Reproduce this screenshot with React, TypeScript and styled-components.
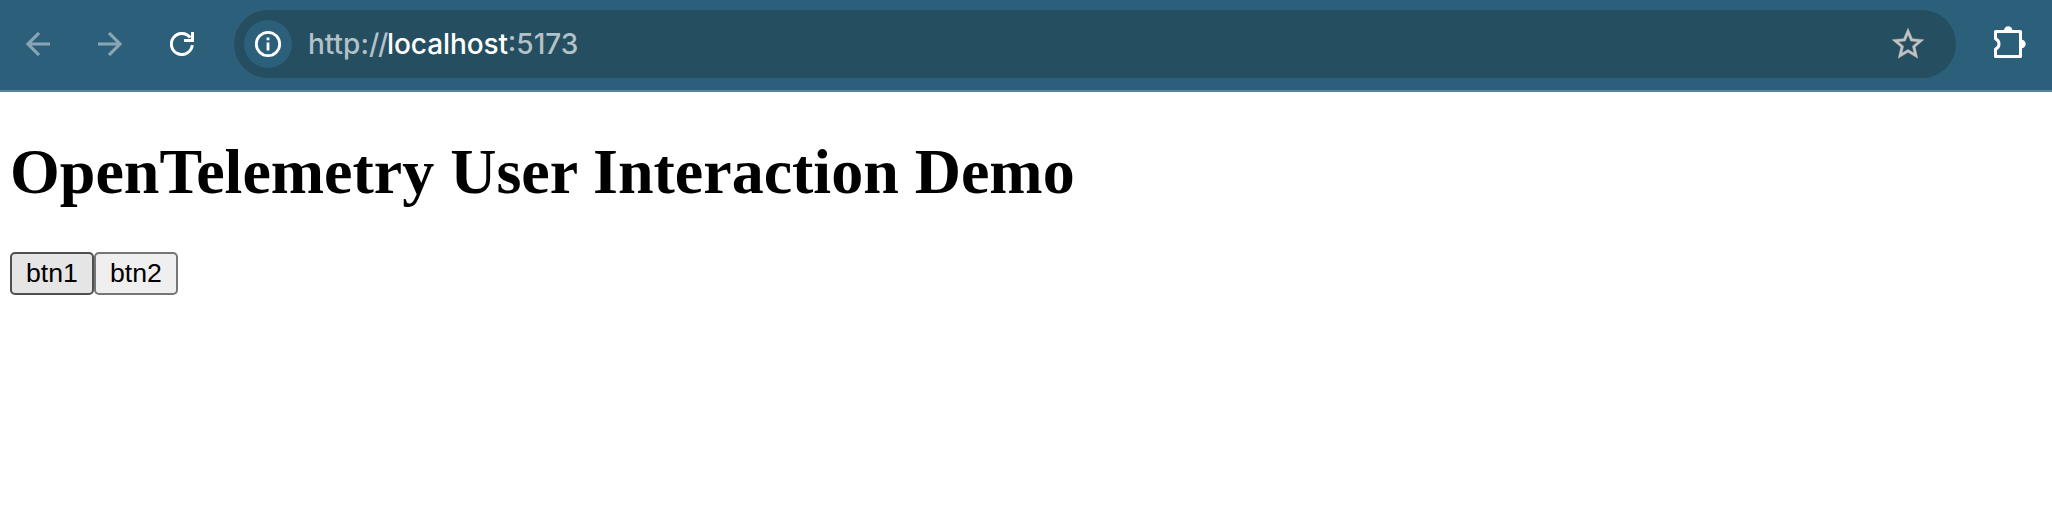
import React from "react";
import styled, { createGlobalStyle } from "styled-components";

const GlobalStyle = createGlobalStyle`
  * { box-sizing: border-box; }
  body { margin: 0; background: #fff; }
`;

const Toolbar = styled.header`
  display: flex;
  align-items: center;
  height: 92px;
  padding: 0 20px 2px 14px;
  background: #2b5f7a;
  border-bottom: 2px solid #5484a0;
`;

const NavGroup = styled.nav`
  display: flex;
  gap: 24px;
  margin-right: 28px;
`;

const IconButton = styled.button<{ $dim?: boolean }>`
  display: flex;
  align-items: center;
  justify-content: center;
  width: 48px;
  height: 48px;
  padding: 0;
  border: 0;
  background: none;
  color: ${(p) => (p.$dim ? "#8aa6b5" : "#fff")};
`;

const AddressBar = styled.div`
  display: flex;
  flex: 1;
  align-items: center;
  height: 68px;
  margin-right: 28px;
  padding: 0 24px 0 10px;
  border-radius: 34px;
  background: #254e60;
`;

const SiteInfo = styled(IconButton)`
  border-radius: 50%;
  background: #2b5f7a;
`;

const Url = styled.span`
  flex: 1;
  margin-left: 16px;
  color: #b3c1c8;
  font: 450 28px/34px Inter, sans-serif;
  white-space: nowrap;
`;

const Slashes = styled.span`
  letter-spacing: -1.3px;
`;

const Host = styled.span`
  color: #fff;
  letter-spacing: -0.1px;
`;

const StarButton = styled(IconButton)`
  color: #c2c2c2;
`;

const Page = styled.main`
  padding: 0 10px;
`;

const Title = styled.h1`
  margin: 43px 0;
  color: #000;
  font: bold 64px/74px "Liberation Serif", serif;
`;

const ButtonRow = styled.div`
  display: flex;
`;

const DemoButton = styled.button<{ $hovered?: boolean }>`
  width: 84px;
  height: 43px;
  padding: 0 0 2px;
  border: 2px solid ${(p) => (p.$hovered ? "#4f4f4f" : "#767676")};
  border-radius: 5px;
  background: ${(p) => (p.$hovered ? "#e5e5e5" : "#efefef")};
  color: #000;
  font: 26.67px/30px "Liberation Sans", Arial, sans-serif;
`;

export default function App() {
  return (
    <>
      <GlobalStyle />
      <Toolbar>
        <NavGroup>
          <IconButton $dim aria-label="Back">
            <svg width="24" height="24" viewBox="0 0 24 24" fill="none" stroke="currentColor" strokeWidth="3.1">
              <path d="M24 12H2.5M13 1L2 12l11 11" />
            </svg>
          </IconButton>
          <IconButton $dim aria-label="Forward">
            <svg width="24" height="24" viewBox="0 0 24 24" fill="none" stroke="currentColor" strokeWidth="3.1">
              <path d="M0 12h21.500M11 1l11 11-11 11" />
            </svg>
          </IconButton>
          <IconButton aria-label="Reload">
            <svg width="24" height="24" viewBox="0 0 24 24" fill="none" stroke="currentColor" strokeWidth="3">
              <path d="M22.3 13.2A10.5 10.5 0 1 1 20.2 5.6M22.5 0v8.5H14" />
            </svg>
          </IconButton>
        </NavGroup>
        <AddressBar>
          <SiteInfo aria-label="Site information">
            <svg width="28" height="28" viewBox="0 0 28 28" fill="none" stroke="currentColor" strokeWidth="2.8">
              <circle cx="14" cy="14" r="11.7" />
              <path d="M14 12.500v8M14 7.500v2.800" />
            </svg>
          </SiteInfo>
          <Url>
            http:<Slashes>//</Slashes>
            <Host>localhost</Host>:5173
          </Url>
          <StarButton aria-label="Bookmark">
            <svg width="38" height="38" viewBox="0 0 24 24" fill="currentColor" stroke="currentColor" strokeWidth="0.25">
              <path d="M22 9.24l-7.19-.62L12 2 9.19 8.63 2 9.24l5.46 4.73L5.82 21 12 17.27 18.18 21l-1.63-7.03L22 9.24zM12 15.4l-3.76 2.27 1-4.28-3.32-2.88 4.38-.38L12 6.1l1.71 4.04 4.38.38-3.32 2.88 1 4.28L12 15.4z" />
            </svg>
          </StarButton>
        </AddressBar>
        <IconButton aria-label="Extensions">
          <svg width="36" height="36" viewBox="0 0 36 36">
            <path d="M5.500 5.500h25v25h-25v-7.300a5.600 5.600 0 0 0 0-10.400z" fill="none" stroke="currentColor" strokeWidth="3" strokeLinejoin="round" />
            <path d="M14 4.500a4.200 4.200 0 0 1 8.400 0zM31.500 13.800a4.200 4.200 0 0 1 0 8.400z" fill="currentColor" />
          </svg>
        </IconButton>
      </Toolbar>
      <Page>
        <Title>OpenTelemetry User Interaction Demo</Title>
        <ButtonRow>
          <DemoButton $hovered>btn1</DemoButton>
          <DemoButton>btn2</DemoButton>
        </ButtonRow>
      </Page>
    </>
  );
}
